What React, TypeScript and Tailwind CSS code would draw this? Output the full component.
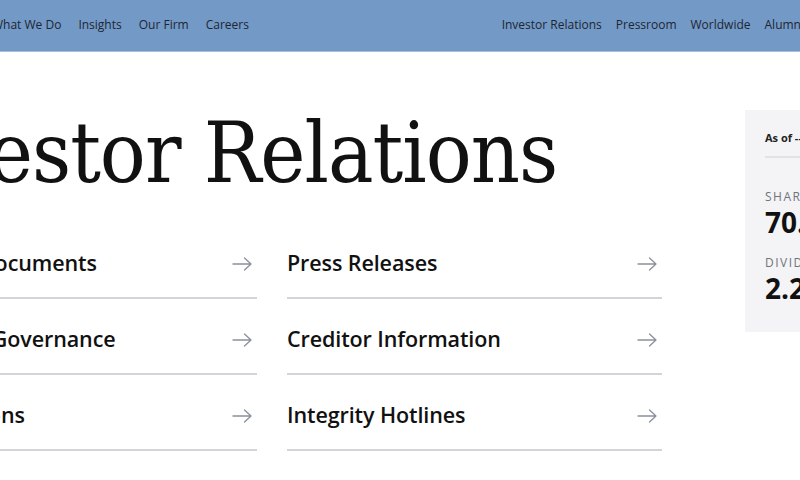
import React from 'react';

const leftNav = ['What We Do', 'Insights', 'Our Firm', 'Careers'];
const rightNav = ['Investor Relations', 'Pressroom', 'Worldwide', 'Alumni'];

const links = [
    ['Financial Documents', 'Press Releases'],
    ['Corporate Governance', 'Creditor Information'],
    ['Presentations', 'Integrity Hotlines'],
];

function Arrow() {
    return (
        <svg width="20" height="14" viewBox="0 0 20 14" fill="none" stroke="#8b909c" strokeWidth="1.3" strokeLinecap="round" strokeLinejoin="round">
            <path d="M1 7H19M12.5 1L19 7L12.5 13" />
        </svg>
    );
}

function LinkRow({ label }: { label: string }) {
    return (
        <a className="flex h-[76px] items-center justify-between border-b-2 border-[#d4d4d8] pt-[7px] pr-[5px]">
            <span className="text-[21.5px] font-semibold text-[#111] tracking-[-0.1px]">{label}</span>
            <Arrow />
        </a>
    );
}

export default function App() {
    return (
        <div
            className="w-[800px] h-[480px] overflow-hidden bg-white"
            style={{ fontFamily: '"Open Sans", "Noto Sans", sans-serif' }}
        >
            <header className="h-[52px] bg-[#7399c6] border-b border-[#a7bfdc] flex items-center text-[12px] text-[#1e2633] pb-[1px]">
                <nav className="flex gap-[17px] ml-[-8px]">
                    {leftNav.map(n => <span key={n}>{n}</span>)}
                </nav>
                <nav className="flex gap-[14px] ml-auto mr-[-4px]">
                    {rightNav.map(n => <span key={n}>{n}</span>)}
                </nav>
            </header>

            <div className="flex ml-[-118px] mt-[58px]">
                <main className="w-[780px] shrink-0">
                    <h1
                        className="text-[85px] leading-none text-[#111] ml-[-14px] tracking-[-1px] font-stretch-condensed"
                        style={{ fontFamily: '"DejaVu Serif", "Liberation Serif", serif' }}
                    >
                        Investor Relations
                    </h1>
                    <div className="grid grid-cols-[375px_375px] gap-x-[30px] mt-[28px]">
                        {links.map(([a, b]) => (
                            <React.Fragment key={a}>
                                <LinkRow label={a} />
                                <LinkRow label={b} />
                            </React.Fragment>
                        ))}
                    </div>
                </main>
                <aside className="ml-[83px] mt-[0px] w-[240px] h-[222px] bg-[#f4f4f6] shrink-0 px-[20px] pt-[20px]">
                    <div className="text-[11px] font-bold text-[#222] pb-[9px] border-b-2 border-[#e2e2e6]">As of -- </div>
                    <div className="mt-[30px] text-[12px] tracking-[1.5px] text-[#707379]">SHARE PRICE</div>
                    <div className="text-[28px] font-bold leading-[32px] text-[#111]">70.12</div>
                    <div className="mt-[16px] text-[12px] tracking-[1.5px] text-[#707379]">DIVIDEND</div>
                    <div className="text-[28px] font-bold leading-[32px] text-[#111]">2.20</div>
                </aside>
            </div>
        </div>
    );
}
